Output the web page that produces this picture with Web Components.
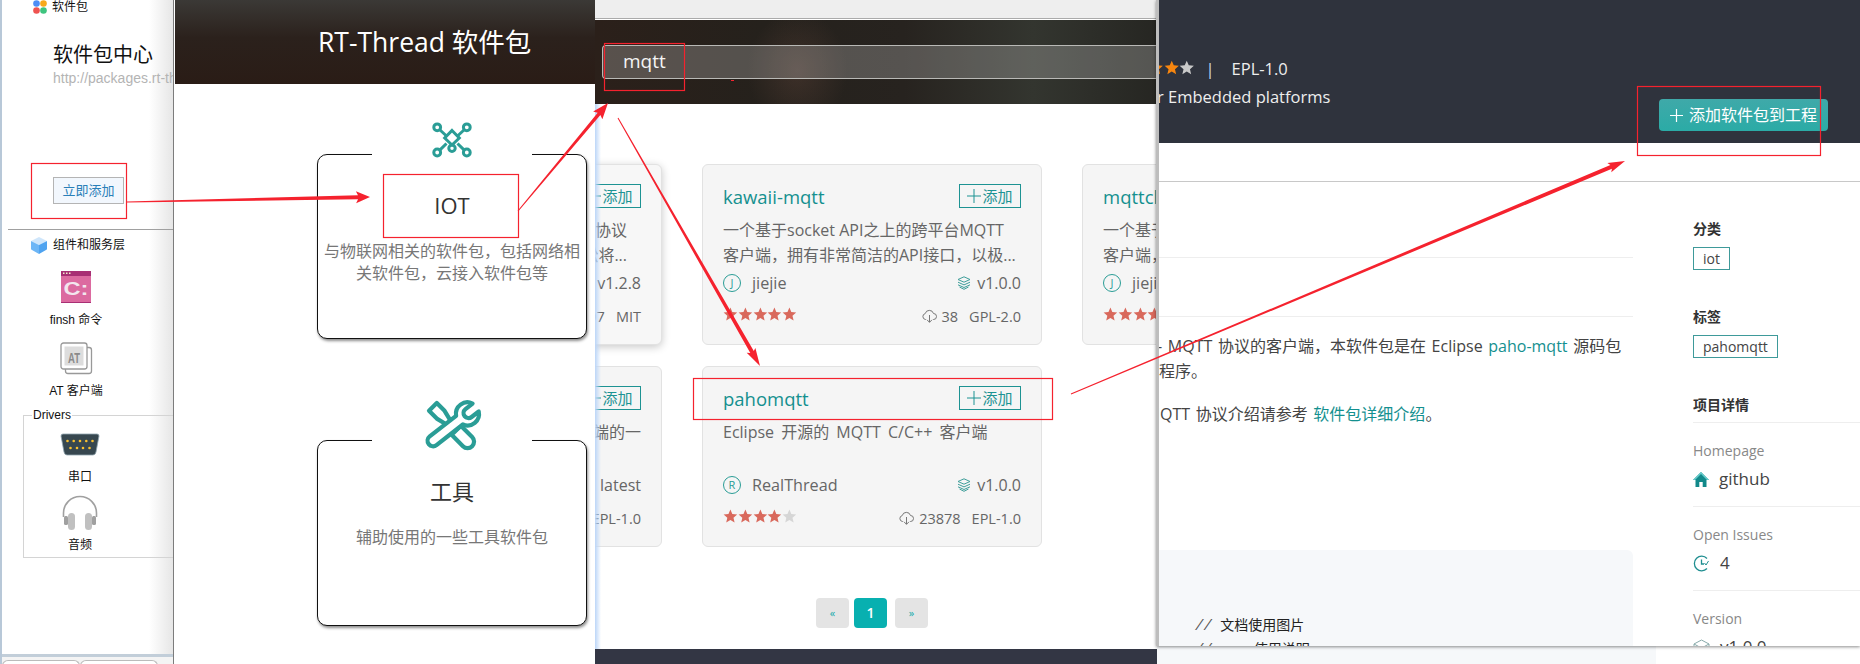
<!DOCTYPE html>
<html lang="zh">
<head>
<meta charset="utf-8">
<title>RT-Thread 软件包</title>
<style>
    html, body { margin: 0; padding: 0; background: #fff; }
    body { width: 1860px; height: 664px; overflow: hidden; position: relative; font-family: "Open Sans", "Noto Sans CJK SC", sans-serif; }
</style>
</head>
<body>

<under-layer></under-layer>

<ide-window></ide-window>

<search-window>
    <pkg-card raised version="v1.2.8" downloads="97" license="MIT" style="--desc-pad: 14px">
        <span slot="desc">协议<br>轻松将...</span>
    </pkg-card>
    <pkg-card avatar="J" author="jiejie" version="v1.0.0" rating="5" downloads="38" license="GPL-2.0">
        <span slot="name">kawaii-mqtt</span>
        <span slot="desc">一个基于socket API之上的跨平台MQTT<br>客户端，拥有非常简洁的API接口，以极...</span>
    </pkg-card>
    <pkg-card avatar="J" author="jiejie" rating="5">
        <span slot="name">mqttclient</span>
        <span slot="desc">一个基于<br>客户端，</span>
    </pkg-card>
    <pkg-card version="latest" license="EPL-1.0">
        <span slot="desc">端的一</span>
    </pkg-card>
    <pkg-card avatar="R" author="RealThread" version="v1.0.0" rating="4" downloads="23878" license="EPL-1.0">
        <span slot="name">pahomqtt</span>
        <span slot="desc" style="word-spacing: 3px">Eclipse 开源的 MQTT C/C++ 客户端</span>
    </pkg-card>
</search-window>

<category-window>
    <category-card style="margin-top: 70px; height: 185px">
        <app-icon slot="icon" name="iot" style="width: 40px; height: 35px"></app-icon>
        <span slot="title">IOT</span>
        与物联网相关的软件包，包括网络相关软件包，云接入软件包等
    </category-card>
    <category-card style="margin-top: 101px; height: 186px">
        <app-icon slot="icon" name="tools" style="width: 52px; height: 52px"></app-icon>
        <span slot="title">工具</span>
        辅助使用的一些工具软件包
    </category-card>
</category-window>

<detail-window></detail-window>

<annotation-layer></annotation-layer>

<script>
    const ICONS = {
        iot: `<svg viewBox="0 0 40 35" fill="none" stroke="#2a9d96" stroke-width="3">
                <circle cx="5.200" cy="4.800" r="3.400"/><circle cx="34.800" cy="4.800" r="3.400"/>
                <circle cx="5.200" cy="30" r="3.400"/><circle cx="34.800" cy="30" r="3.400"/>
                <circle cx="20" cy="25.800" r="3.200"/>
                <path d="M7.500 7 14.500 13.500M32.500 7 25.500 13.500M7.500 27.800 14.500 21M32.500 27.800 25.500 21"/>
                <path d="M20 8 27.300 15.500 20 22.500 12.700 15.500Z"/>
              </svg>`,
        tools: `<svg viewBox="0 0 52 52" fill="#fff" stroke="#2a9d96" stroke-width="4.200" stroke-linejoin="round">
                <g transform="rotate(-45 26 26)"><path d="M20.500-1H31.500V10L28.500 22H23.500L20.500 10Z"/><path d="M19.500 32H32.500V48a6.500 6.500 0 0 1-13 0Z"/></g>
                <g transform="rotate(52 26 26)"><path d="M20.500 16.500V50a5.500 5.500 0 0 0 11 0V16.500A11.500 11.500 0 0 0 31-4V5a5 5 0 0 1-10 0V-4A11.500 11.500 0 0 0 20.500 16.500Z"/></g>
              </svg>`,
        logo: `<svg viewBox="0 0 14 14"><circle cx="3.500" cy="3.500" r="3.300" fill="#4d8df5"/><circle cx="10.500" cy="3.500" r="3.300" fill="#f7a81b"/><circle cx="3.500" cy="10.500" r="3.300" fill="#ef5350"/><circle cx="10.500" cy="10.500" r="3.300" fill="#3ec47e"/></svg>`,
        cube: `<svg viewBox="0 0 16 17"><path d="M8 0 16 4 8 8 0 4Z" fill="#cfe6fb"/><path d="M0 4 8 8V17L1 13Q0 12.500 0 12Z" fill="#6db6f6"/><path d="M16 4 8 8V17L15 13Q16 12.500 16 12Z" fill="#4fa3f0"/></svg>`,
        finsh: `<svg viewBox="0 0 30 32"><rect width="30" height="32" rx="1" fill="#dc6aa0"/><rect width="30" height="5" fill="#a82f74"/><rect y="31" width="30" height="1" fill="#a82f74"/><rect x="2" y="1.500" width="1.500" height="1.500" fill="#eec"/><rect x="5" y="1.500" width="1.500" height="1.500" fill="#eec"/><rect x="8" y="1.500" width="1.500" height="1.500" fill="#eec"/><text x="15" y="24" text-anchor="middle" font-family="Liberation Sans" font-weight="700" font-size="18" fill="#f3e6ee" textLength="25" lengthAdjust="spacingAndGlyphs">C:\</text></svg>`,
        at: `<svg viewBox="0 0 32 32" fill="#fff" stroke="#999" stroke-width="1.300"><rect x="5.500" y="5.500" width="26" height="26" rx="2.500"/><rect x="1" y="1" width="26" height="26" rx="2.500"/><rect x="4.500" y="4.500" width="19" height="19" fill="#ddd" stroke="none"/><text x="14" y="20.500" text-anchor="middle" font-family="Liberation Sans" font-weight="700" font-size="15" fill="#8a8a8a" stroke="none" textLength="12" lengthAdjust="spacingAndGlyphs">AT</text></svg>`,
        serial: `<svg viewBox="0 0 38 21"><path d="M2 0H36Q38 0 38 2L35 18Q34.500 21 32 21H6Q3.500 21 3 18L0 2Q0 0 2 0Z" fill="#37474f" stroke="#90a4ae" stroke-width=".8"/><g fill="#fbc02d"><circle cx="6.500" cy="7" r="1.300"/><circle cx="12.700" cy="7" r="1.300"/><circle cx="19" cy="7" r="1.300"/><circle cx="25.300" cy="7" r="1.300"/><circle cx="31.500" cy="7" r="1.300"/><circle cx="9.500" cy="14" r="1.300"/><circle cx="16" cy="14" r="1.300"/><circle cx="22" cy="14" r="1.300"/><circle cx="28.500" cy="14" r="1.300"/></g></svg>`,
        headphones: `<svg viewBox="0 0 36 36"><path d="M1.500 22V18a16.500 16.500 0 0 1 33 0v4" fill="none" stroke="#a0a0a0" stroke-width="1.600"/><rect x="6" y="18" width="7" height="17" rx="3.500" fill="#c0c0c0"/><rect x="23" y="18" width="7" height="17" rx="3.500" fill="#c0c0c0"/><rect x="2" y="21" width="4" height="9" rx="1.500" fill="#a0a0a0"/><rect x="30" y="21" width="4" height="9" rx="1.500" fill="#a0a0a0"/></svg>`,
        layers: `<svg viewBox="0 0 14 14" fill="none" stroke="#3f9e9a" stroke-width="1"><path d="M7 .8 13 3.500 7 6.200 1 3.500Z"/><path d="M1 6.200 7 8.900 13 6.200"/><path d="M1 8.800 7 11.500 13 8.800"/><path d="M2.500 11 7 13.300 11.500 11"/></svg>`,
        download: `<svg viewBox="0 0 15 14" fill="none" stroke="#777" stroke-width="1"><path d="M4 10.500H3.500A3 3 0 0 1 3.200 4.600 4.300 4.300 0 0 1 11.500 4.500 3 3 0 0 1 11.500 10.500H11"/><path d="M7.500 6V13.300M5 10.800 7.500 13.300 10 10.800"/></svg>`,
        home: `<svg viewBox="0 0 16 15"><path d="M8 0 16 8H13.500V15H9.700V10H6.300V15H2.500V8H0Z" fill="#12898a"/><path d="M8 0 16 8H14L8 2 2 8H0Z" fill="#6cc"/></svg>`,
        issue: `<svg viewBox="0 0 17 17" fill="none" stroke="#1f8e90" stroke-width="1.300"><path d="M14 3.500A7.300 7.300 0 1 0 14 13.500"/><path d="M8.500 4.500V9H11"/><path d="M11.500 8 13 10 15.500 6" stroke-width="1"/></svg>`,
        box: `<svg viewBox="0 0 17 17" fill="none" stroke="#8aa" stroke-width="1"><path d="M8.500 1 16 5 8.500 9 1 5ZM1 5V12L8.500 16 16 12V5M8.500 9V16"/></svg>`
    };

    const starShape = '12,1 15.100,8.300 23,9 17,14.200 18.800,22 12,17.900 5.200,22 7,14.200 1,9 8.900,8.300';

    function makeTemplate(html) {
        const template = document.createElement('template');
        template.innerHTML = html;
        return template;
    }

    class ShadowElement extends HTMLElement {
        constructor() {
            super();
            this.attachShadow({ mode: 'open' });
            this.shadowRoot.appendChild(this.constructor.template.content.cloneNode(true));
        }
    }

    class AppIcon extends HTMLElement {
        constructor() {
            super();
            this.attachShadow({ mode: 'open' }).innerHTML = `
                <style>
                    :host { display: inline-block; flex: none; line-height: 0; }
                    svg { width: 100%; height: 100%; display: block; overflow: visible; }
                </style>
                ${ICONS[this.getAttribute('name')] || ''}`;
        }
    }

    class StarRating extends HTMLElement {
        constructor() {
            super();
            const value = Number(this.getAttribute('value') || 0);
            const on = this.getAttribute('on') || '#d9695c';
            const off = this.getAttribute('off') || '#d6d6d6';
            const size = Number(this.getAttribute('size') || 14.8);
            let stars = '';
            for (let i = 0; i < 5; i++) {
                stars += `<svg viewBox="0 0 24 24" width="${size}" height="${size}"><polygon points="${starShape}" fill="${i < value ? on : off}"/></svg>`;
            }
            this.attachShadow({ mode: 'open' }).innerHTML = `
                <style>
                    :host { display: inline-flex; flex: none; align-items: center; }
                    svg { display: block; flex: none; }
                </style>${stars}`;
        }
    }

    class IdeWindow extends ShadowElement {
        static template = makeTemplate(`
            <style>
                :host {
                    position: absolute; left: 0; top: 0; width: 173px; height: 664px;
                    box-sizing: border-box; border-left: 2px solid #b8c8d8;
                    display: flex; flex-direction: column; overflow: hidden;
                    background: linear-gradient(to right, #fff 86%, #e6e6e6);
                    font: 12px/16px "Liberation Sans", "Noto Sans CJK SC", sans-serif; color: #111;
                }
                .head { display: flex; align-items: center; gap: 5px; height: 14px; padding-left: 31px; line-height: 14px; }
                .title { margin: 27px 0 0 51px; font-size: 20px; line-height: 28px; white-space: nowrap; }
                .url { margin: 1px 0 0 51px; font-size: 14px; line-height: 16px; color: #b4b4b4; white-space: nowrap; }
                .add {
                    align-self: flex-start; margin: 91px 0 0 51px; width: 71px; height: 27px; box-sizing: border-box;
                    border: 1px solid #b4b4b4; background: #f2f7fd; color: #2a7fb8;
                    font-size: 13px; line-height: 25px; text-align: center;
                }
                .rule { margin: 25px 0 0 6px; height: 1px; background: #a0a0a0; }
                .section { margin-top: 6px; height: 18px; padding-left: 29px; gap: 6px; }
                .block { display: flex; flex-direction: column; align-items: center; width: 90px; margin-left: 29px; white-space: nowrap; }
                .block span { margin-top: 9px; }
                fieldset { margin: 9px 0 0 21px; padding: 0 0 4px; border: 1px solid #d4d4d4; border-right: 0; width: 160px; box-sizing: border-box; }
                legend { margin-left: 8px; padding: 0 1px; line-height: 14px; }
                .drv { display: flex; flex-direction: column; align-items: center; width: 112px; }
                .bottom { margin-top: auto; height: 7px; border-top: 3px solid #c2ced9; display: flex; background: #f4f4f4; }
                .tab { width: 76px; height: 14px; margin-top: 3px; border: 1px solid #bbb; border-bottom: 0; border-radius: 6px 6px 0 0; background: #fff; }
            </style>
            <div class="head"><app-icon name="logo" style="width:14px;height:14px"></app-icon>软件包</div>
            <div class="title">软件包中心</div>
            <div class="url">http://packages.rt-thread.org</div>
            <div class="add">立即添加</div>
            <div class="rule"></div>
            <div class="head section"><app-icon name="cube" style="width:16px;height:17px"></app-icon>组件和服务层</div>
            <div class="block" style="margin-top:17px"><app-icon name="finsh" style="width:30px;height:32px"></app-icon><span>finsh 命令</span></div>
            <div class="block" style="margin-top:14px"><app-icon name="at" style="width:32px;height:32px"></app-icon><span>AT 客户端</span></div>
            <fieldset>
                <legend>Drivers</legend>
                <div class="drv" style="margin-top:12px"><app-icon name="serial" style="width:38px;height:21px"></app-icon><span style="margin-top:14px">串口</span></div>
                <div class="drv" style="margin-top:10px"><app-icon name="headphones" style="width:36px;height:36px"></app-icon><span style="margin-top:6px">音频</span></div>
            </fieldset>
            <div class="bottom"><div class="tab"></div><div class="tab"></div></div>
        `);
    }

    class CategoryWindow extends ShadowElement {
        static template = makeTemplate(`
            <style>
                :host {
                    position: absolute; left: 173px; top: 0; width: 422px; height: 664px; z-index: 3;
                    box-sizing: border-box; border-left: 1px solid #7c7c7c; padding-left: 1px;
                    background: #fff; display: block;
                }
                header {
                    height: 84px; box-sizing: border-box; padding-left: 143px;
                    background: linear-gradient(#3b3936, #2b211c 45%, #2a1c16);
                    color: #fff; font-size: 26.500px; line-height: 84px; white-space: nowrap;
                }
                .list { display: flex; flex-direction: column; padding-left: 142px; }
            </style>
            <header>RT-Thread 软件包</header>
            <div class="list"><slot></slot></div>
        `);
    }

    class CategoryCard extends ShadowElement {
        static template = makeTemplate(`
            <style>
                :host {
                    display: block; position: relative; box-sizing: border-box; width: 270px;
                    border: 1px solid #111; border-radius: 10px; box-shadow: 1px 2px 3px rgba(0,0,0,.45);
                    padding: 35px 4px 0; text-align: center; color: #777; font-size: 16px; line-height: 22px; background: #fff;
                }
                .notch { position: absolute; left: 54px; top: -2px; width: 160px; height: 4px; background: #fff; }
                .icon { position: absolute; left: 134px; top: -15px; transform: translate(-50%, -50%); display: flex; }
                .title { color: #333; font-size: 22px; line-height: 30px; margin-bottom: 20px; }
            </style>
            <div class="notch"></div>
            <div class="icon"><slot name="icon"></slot></div>
            <div class="title"><slot name="title"></slot></div>
            <slot></slot>
        `);
    }

    class SearchWindow extends ShadowElement {
        static template = makeTemplate(`
            <style>
                :host {
                    position: absolute; left: 595px; top: 0; width: 562px; height: 664px; z-index: 1;
                    display: flex; flex-direction: column; overflow: hidden; background: #fff;
                }
                .bar { height: 18px; flex: none; background: #eee; border-bottom: 1px solid #aaa; margin-bottom: 1px; }
                header {
                    height: 84px; flex: none; box-sizing: border-box; padding: 25px 0 0 7px;
                    background:
                        radial-gradient(ellipse 50px 60px at 36% 60%, rgba(90,65,55,.45), transparent),
                        linear-gradient(to right, #2b201a, #25211c 30%, #27231f 55%, #33352f 78%, #262622);
                }
                .input {
                    height: 34px; box-sizing: border-box; width: 560px;
                    border: 1px solid #b9b9b6; border-right: 0; border-radius: 4px 0 0 4px;
                    background: rgba(255,255,255,.22); color: #f4f4f4;
                    font-size: 19px; line-height: 30px; padding-left: 20px;
                }
                .grid {
                    flex: none; display: grid; grid-template-columns: 340px 340px 340px; column-gap: 40px; row-gap: 21px;
                    margin: 60px 0 0 -273px;
                }
                .pages { flex: none; display: flex; height: 30px; margin: 51px 0 0 221px; font-size: 11px; line-height: 30px; text-align: center; color: #1aa; }
                .pages div { width: 33px; background: #e4e4e4; border-radius: 4px; }
                .pages .on { background: #08b0b0; color: #fff; font-size: 14px; font-weight: 600; margin: 0 8px 0 5px; }
                footer { flex: none; height: 15px; margin-top: 21px; background: #333644; }
                .edge { position: absolute; left: 0; top: 104px; bottom: 15px; width: 6px; background: linear-gradient(to right, #bcd6f8, rgba(255,255,255,0)); }
            </style>
            <div class="bar"></div>
            <header><div class="input">mqtt</div></header>
            <div class="grid"><slot></slot></div>
            <div class="pages"><div>«</div><div class="on">1</div><div>»</div></div>
            <footer></footer>
            <div class="edge"></div>
        `);
    }

    class PkgCard extends ShadowElement {
        static template = makeTemplate(`
            <style>
                :host {
                    display: block; box-sizing: border-box; height: 181px; padding: 19px 20px 0 20px;
                    background: #f5f5f5; border: 1px solid #e2e2e2; border-radius: 6px;
                    font-size: 16px; color: #666; white-space: nowrap;
                }
                :host([raised]) { box-shadow: 0 2px 8px rgba(0,0,0,.22); background: #f7f7f7; }
                .row { display: flex; justify-content: space-between; align-items: center; height: 24px; }
                .name { color: #14908f; font-size: 18.500px; }
                .add { flex: none; box-sizing: border-box; width: 62px; height: 24px; border: 1px solid #1d9393; color: #1d9393; display: flex; align-items: center; justify-content: center; gap: 1px; line-height: 22px; font-size: 15px; }
                .add svg { width: 14px; height: 14px; flex: none; }
                .desc { height: 50px; margin: 10px 0 3px; line-height: 25px; padding-right: var(--desc-pad, 0); }
                :host(:not([author])) .desc { text-align: right; }
                .who, .ver, .stats { display: flex; align-items: center; }
                .who { gap: 11px; font-size: 16.200px; }
                .avatar { width: 18px; height: 18px; box-sizing: border-box; border: 1px solid #2a9d96; border-radius: 50%; color: #2a9d96; font-size: 11px; line-height: 16px; text-align: center; }
                .ver { gap: 6px; font-size: 16px; }
                .stats { gap: 5px; font-size: 14.500px; margin-left: auto; }
                .lic { margin-left: 6px; }
                .stars { margin-top: 9px; }
            </style>
            <div class="row">
                <div class="name"><slot name="name"></slot></div>
                <div class="add"><svg viewBox="0 0 14 14"><path d="M7 0V14M0 7H14" stroke="#1d9393" stroke-width="1"/></svg>添加</div>
            </div>
            <div class="desc"><slot name="desc"></slot></div>
            <div class="row">
                <div class="who" id="who"></div>
                <div class="ver" id="ver"></div>
            </div>
            <div class="row stars">
                <div id="rating"></div>
                <div class="stats" id="stats"></div>
            </div>
        `);

        connectedCallback() {
            const root = this.shadowRoot;
            const attr = name => this.getAttribute(name);
            if (attr('author')) {
                root.querySelector('#who').innerHTML = `<div class="avatar">${attr('avatar')}</div><span>${attr('author')}</span>`;
            }
            if (attr('version')) {
                root.querySelector('#ver').innerHTML = `<app-icon name="layers" style="width:14px;height:14px"></app-icon><span>${attr('version')}</span>`;
            }
            if (attr('rating')) {
                root.querySelector('#rating').innerHTML = `<star-rating value="${attr('rating')}"></star-rating>`;
            }
            let stats = '';
            if (attr('downloads')) {
                stats += `<app-icon name="download" style="width:15px;height:14px"></app-icon><span>${attr('downloads')}</span>`;
            }
            if (attr('license')) {
                stats += `<span class="lic">${attr('license')}</span>`;
            }
            root.querySelector('#stats').innerHTML = stats;
        }
    }

    class DetailWindow extends ShadowElement {
        static template = makeTemplate(`
            <style>
                :host {
                    position: absolute; left: 1156px; top: 0; width: 704px; height: 646px; z-index: 2;
                    box-sizing: border-box; border-left: 3px solid #bdbdbd; background: #fff;
                    box-shadow: 0 1px 3px rgba(0,0,0,.45); overflow: hidden; display: block;
                    font-size: 16px; color: #444;
                }
                header { height: 143px; background: #2f333d; color: #eee; display: flex; justify-content: space-between; }
                .meta { padding-top: 56px; }
                .line { display: flex; align-items: center; height: 24px; white-space: nowrap; font-size: 16.500px; }
                .sep { margin: 0 17px 0 11px; color: #cde; }
                .cta {
                    margin: 99px 32px 0 0; width: 169px; height: 32px; box-sizing: border-box; padding-left: 11px;
                    background: linear-gradient(#3fa9a9, #2baba6); border-radius: 4px; color: #fff;
                    font-size: 16px; line-height: 32px; white-space: nowrap; display: flex; align-items: center; gap: 6px;
                }
                .cta svg { width: 13px; height: 13px; flex: none; }
                .tabs { height: 39px; box-sizing: border-box; border-bottom: 1px solid #c8c8c8; }
                .body { display: grid; grid-template-columns: 474px 1fr; column-gap: 60px; }
                .rule { height: 1px; background: #eee; }
                p { margin: 0; line-height: 25px; white-space: nowrap; word-spacing: 1.500px; }
                a { color: #14908f; }
                .code { margin-top: 123px; height: 120px; box-sizing: border-box; padding: 64px 0 0 36px; background: #f6f8fa; border-radius: 0 6px 0 0; font: 14px/24px "Liberation Mono", "Noto Sans CJK SC", monospace; color: #222; white-space: pre; }
                .code i { color: #555; }
                aside { padding-top: 37px; font-size: 14px; }
                h4 { margin: 0; font-size: 14px; line-height: 20px; color: #333; font-weight: 600; }
                .tag { display: inline-block; margin: 8px 0 37px; height: 23px; line-height: 21px; box-sizing: border-box; padding: 0 9px; border: 1px solid #3e9a9a; color: #444; vertical-align: top; }
                .tagline { height: 68px; }
                .item { height: 84px; box-sizing: border-box; padding-top: 14px; border-top: 1px solid #eee; }
                .item label { display: block; line-height: 28px; color: #888; }
                .value { display: flex; align-items: center; gap: 10px; line-height: 28px; font-size: 17px; color: #444; }
            </style>
            <header>
                <div class="meta">
                    <div class="line">
                        <star-rating value="4" on="#f7860f" off="#c9c9c9" size="15.500" style="margin-left:-42px"></star-rating>
                        <span class="sep">|</span><span>EPL-1.0</span>
                    </div>
                    <div class="line" style="margin:4px 0 0 -2px">r Embedded platforms</div>
                </div>
                <div class="cta"><svg viewBox="0 0 13 13"><path d="M6.500 0V13M0 6.500H13" stroke="#fff" stroke-width="1.200"/></svg>添加软件包到工程</div>
            </header>
            <div class="tabs"></div>
            <div class="body">
                <div>
                    <div class="rule" style="margin-top:75px"></div>
                    <div class="rule" style="margin-top:58px"></div>
                    <p style="margin:17px 0 0 -2px">- MQTT 协议的客户端，本软件包是在 Eclipse <a>paho-mqtt</a> 源码包<br><span style="margin-left:2px">程序。</span></p>
                    <p style="margin:18px 0 0 -3.500px">IQTT 协议介绍请参考 <a>软件包详细介绍</a>。</p>
                    <div class="code"><i>//</i> 文档使用图片
<i>//</i>     使用说明</div>
                </div>
                <aside>
                    <h4>分类</h4>
                    <div class="tagline"><span class="tag">iot</span></div>
                    <h4>标签</h4>
                    <div class="tagline"><span class="tag">pahomqtt</span></div>
                    <h4 style="margin-bottom:7px">项目详情</h4>
                    <div class="item"><label>Homepage</label><div class="value"><app-icon name="home" style="width:16px;height:15px"></app-icon>github</div></div>
                    <div class="item"><label>Open Issues</label><div class="value"><app-icon name="issue" style="width:17px;height:17px"></app-icon>4</div></div>
                    <div class="item"><label>Version</label><div class="value"><app-icon name="box" style="width:17px;height:17px"></app-icon>v1.0.0</div></div>
                </aside>
            </div>
        `);
    }

    class UnderLayer extends ShadowElement {
        static template = makeTemplate(`
            <style>
                :host { position: absolute; left: 1156px; top: 640px; width: 704px; height: 24px; overflow: hidden; background: #fff; display: flex; }
                .code { width: 500px; background: #f6f8fa; }
                .text { margin: 20px 0 0 60px; font-size: 14px; line-height: 20px; color: #888; }
            </style>
            <div class="code"></div>
            <div class="text">Version</div>
        `);
    }

    class AnnotationLayer extends HTMLElement {
        constructor() {
            super();
            const red = '#f5222e';
            // x, y, width, height of the hand drawn boxes
            const boxes = [[31, 163, 95, 55], [383, 174, 135, 63], [604, 43, 80, 47], [693, 378, 359, 41], [1637, 86, 183, 69]];
            // tail x, tail y, tip x, tip y, shaft width, head length, head half width
            const arrows = [
                [127, 202, 370, 197, 4, 12, 6],
                [518, 211, 608, 103, 3.5, 14, 6],
                [618, 118, 760, 366, 4, 16, 5],
                [1071, 394, 1625, 161, 4, 15, 5]
            ];
            const shapes = boxes.map(b => `<rect x="${b[0] + .5}" y="${b[1] + .5}" width="${b[2]}" height="${b[3]}" fill="none" stroke="${red}" stroke-width="1.200"/>`);
            arrows.forEach(a => {
                const len = Math.hypot(a[2] - a[0], a[3] - a[1]);
                const ux = (a[2] - a[0]) / len, uy = (a[3] - a[1]) / len;
                const bx = a[2] - ux * a[5], by = a[3] - uy * a[5];
                const pt = (x, y, off) => `${x - uy * off},${y + ux * off}`;
                const poly = [
                    pt(a[0], a[1], -.5), pt(bx, by, -a[4] / 2), pt(bx - ux * 2, by - uy * 2, -a[6]),
                    pt(a[2], a[3], 0),
                    pt(bx - ux * 2, by - uy * 2, a[6]), pt(bx, by, a[4] / 2), pt(a[0], a[1], .5)
                ];
                shapes.push(`<polygon points="${poly.join(' ')}" fill="${red}"/>`);
            });
            shapes.push(`<rect x="731" y="80" width="3" height="1" fill="${red}"/>`);
            this.attachShadow({ mode: 'open' }).innerHTML = `
                <style>
                    :host { position: absolute; left: 0; top: 0; width: 1860px; height: 664px; z-index: 5; pointer-events: none; }
                    svg { display: block; }
                </style>
                <svg width="1860" height="664" viewBox="0 0 1860 664">${shapes.join('')}</svg>`;
        }
    }

    customElements.define('app-icon', AppIcon);
    customElements.define('star-rating', StarRating);
    customElements.define('ide-window', IdeWindow);
    customElements.define('category-window', CategoryWindow);
    customElements.define('category-card', CategoryCard);
    customElements.define('search-window', SearchWindow);
    customElements.define('pkg-card', PkgCard);
    customElements.define('detail-window', DetailWindow);
    customElements.define('under-layer', UnderLayer);
    customElements.define('annotation-layer', AnnotationLayer);
</script>
</body>
</html>
